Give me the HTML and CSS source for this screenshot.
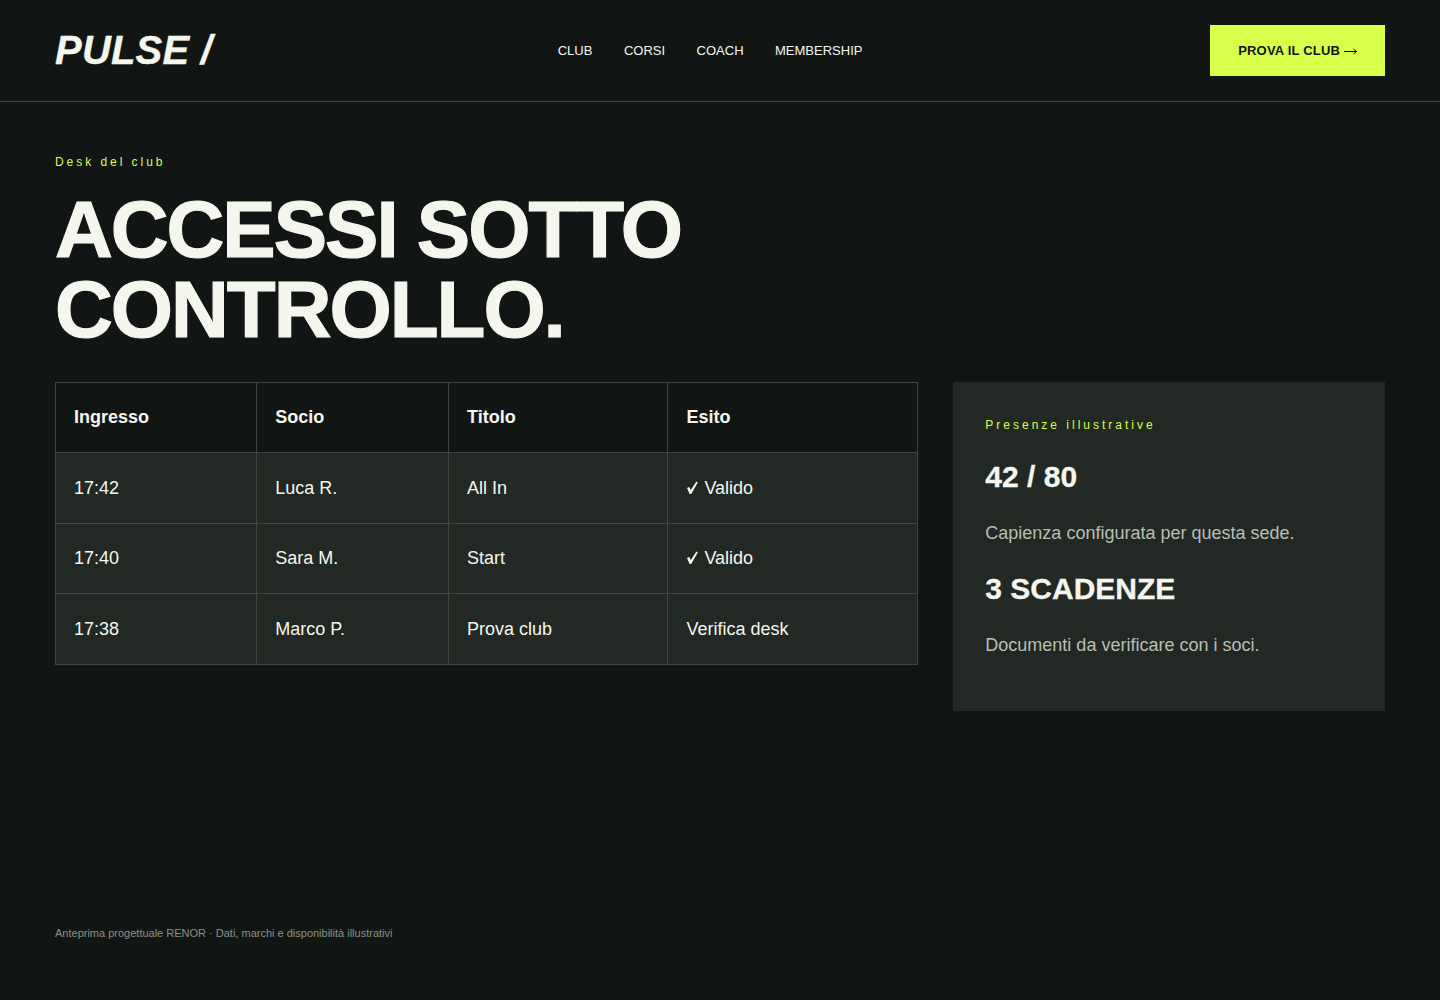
FILE: index.html
```html
<!DOCTYPE html>
<html lang="it">

<head>
    <meta charset="UTF-8">
    <meta name="viewport" content="width=device-width, initial-scale=1.0">
    <title>Pulse - Desk del club</title>
    <link rel="stylesheet" href="styles.css">
</head>

<body>
    <header class="topbar">
        <a class="logo" href="#">PULSE /</a>
        <nav class="nav">
            <a href="#">CLUB</a>
            <a href="#">CORSI</a>
            <a href="#">COACH</a>
            <a href="#">MEMBERSHIP</a>
        </nav>
        <a class="cta" href="#">PROVA IL CLUB
            <svg class="cta-arrow" width="13" height="7" viewBox="0 0 13 7" aria-hidden="true">
                <path d="M0 3.5H12.5M9.5 1L12.5 3.5L9.5 6" fill="none" stroke="currentColor" stroke-width="1"/>
            </svg>
        </a>
    </header>
    <main class="content">
        <p class="eyebrow">Desk del club</p>
        <h1>ACCESSI SOTTO<br>CONTROLLO.</h1>
        <div class="desk">
            <table class="access-table">
                <thead>
                    <tr>
                        <th>Ingresso</th>
                        <th>Socio</th>
                        <th>Titolo</th>
                        <th>Esito</th>
                    </tr>
                </thead>
                <tbody>
                    <tr>
                        <td>17:42</td>
                        <td>Luca R.</td>
                        <td>All In</td>
                        <td><svg class="check" width="13" height="15" viewBox="0 0 13 15" aria-hidden="true"><path d="M1 8L3.2 7L4.7 10L10.4 1.6L11.8 2.4L5.2 14H3.6Z" fill="currentColor"/></svg>Valido</td>
                    </tr>
                    <tr>
                        <td>17:40</td>
                        <td>Sara M.</td>
                        <td>Start</td>
                        <td><svg class="check" width="13" height="15" viewBox="0 0 13 15" aria-hidden="true"><path d="M1 8L3.2 7L4.7 10L10.4 1.6L11.8 2.4L5.2 14H3.6Z" fill="currentColor"/></svg>Valido</td>
                    </tr>
                    <tr>
                        <td>17:38</td>
                        <td>Marco P.</td>
                        <td>Prova club</td>
                        <td>Verifica desk</td>
                    </tr>
                </tbody>
            </table>
            <aside class="panel">
                <p class="panel-label">Presenze illustrative</p>
                <h2>42 / 80</h2>
                <p class="panel-text">Capienza configurata per questa sede.</p>
                <h2>3 SCADENZE</h2>
                <p class="panel-text">Documenti da verificare con i soci.</p>
            </aside>
        </div>
    </main>
    <footer class="footer">Anteprima progettuale RENOR · Dati, marchi e disponibilità illustrativi</footer>
</body>

</html>
```
FILE: styles.css
```css
:root {
    --background-color: #111614;
    --panel-color: #222823;
    --text-color: #f5f7ee;
    --accent-color: #d8ff4a;
    --line-color: #3f4640;
    --muted-color: #b9beb4;
}

* {
    box-sizing: border-box;
}

body {
    display: flex;
    flex-direction: column;
    font-family: "Liberation Sans", Arial, sans-serif;
    margin: 0;
    min-height: 100vh;
    background-color: var(--background-color);
    color: var(--text-color);
}

a {
    color: inherit;
    text-decoration: none;
}

.topbar {
    display: flex;
    justify-content: space-between;
    align-items: center;
    height: 102px;
    padding: 0 55px;
    border-bottom: 1px solid var(--line-color);
}

.logo {
    font-size: 40px;
    font-weight: 700;
    font-style: italic;
    letter-spacing: 0.2px;
    -webkit-text-stroke: 0.3px;
}

.nav {
    display: flex;
    gap: 31.5px;
    margin-right: 2px;
    font-size: 13px;
}

.cta {
    padding: 17px 28px;
    background-color: var(--accent-color);
    color: #111614;
    font-size: 13px;
    font-weight: 700;
    line-height: 17px;
    letter-spacing: 0.2px;
}

.content {
    flex: 1;
    padding: 53px 55px 0;
}

.eyebrow {
    margin: 0 0 21px;
    color: var(--accent-color);
    font-size: 12px;
    line-height: 14px;
    letter-spacing: 2.95px;
}

h1 {
    margin: 0 0 32px;
    font-size: 80px;
    line-height: 80px;
    font-weight: 700;
    letter-spacing: -2px;
    -webkit-text-stroke: 1.2px;
}

.desk {
    display: grid;
    grid-template-columns: 2fr 1fr;
    gap: 35px;
    align-items: start;
}

.access-table {
    width: 100%;
    border-collapse: collapse;
    border: 1px solid var(--line-color);
    font-size: 18px;
}

.access-table th,
.access-table td {
    padding: 0 18px;
    height: 70.67px;
    border: 1px solid var(--line-color);
    text-align: left;
}

.access-table th {
    height: 70px;
}

.access-table td {
    padding-top: 0.8px;
    background-color: var(--panel-color);
}

.check {
    margin-right: 5px;
    vertical-align: -1px;
}

.panel {
    padding: 32px;
    background-color: var(--panel-color);
}

.panel-label {
    margin: 0 0 23px;
    color: var(--accent-color);
    font-size: 12px;
    line-height: 22px;
    letter-spacing: 3px;
}

.panel h2 {
    margin: 0 0 25px;
    font-size: 30px;
    line-height: 36px;
    -webkit-text-stroke: 0.3px;
}

.panel-text {
    margin: 0 0 24.4px;
    color: var(--muted-color);
    font-size: 18px;
    line-height: 27px;
}

.panel-text:last-child {
    margin-bottom: 19.6px;
}

.footer {
    padding: 0 55px 60px;
    color: #8b9186;
    font-size: 11px;
    line-height: 14px;
}
```
